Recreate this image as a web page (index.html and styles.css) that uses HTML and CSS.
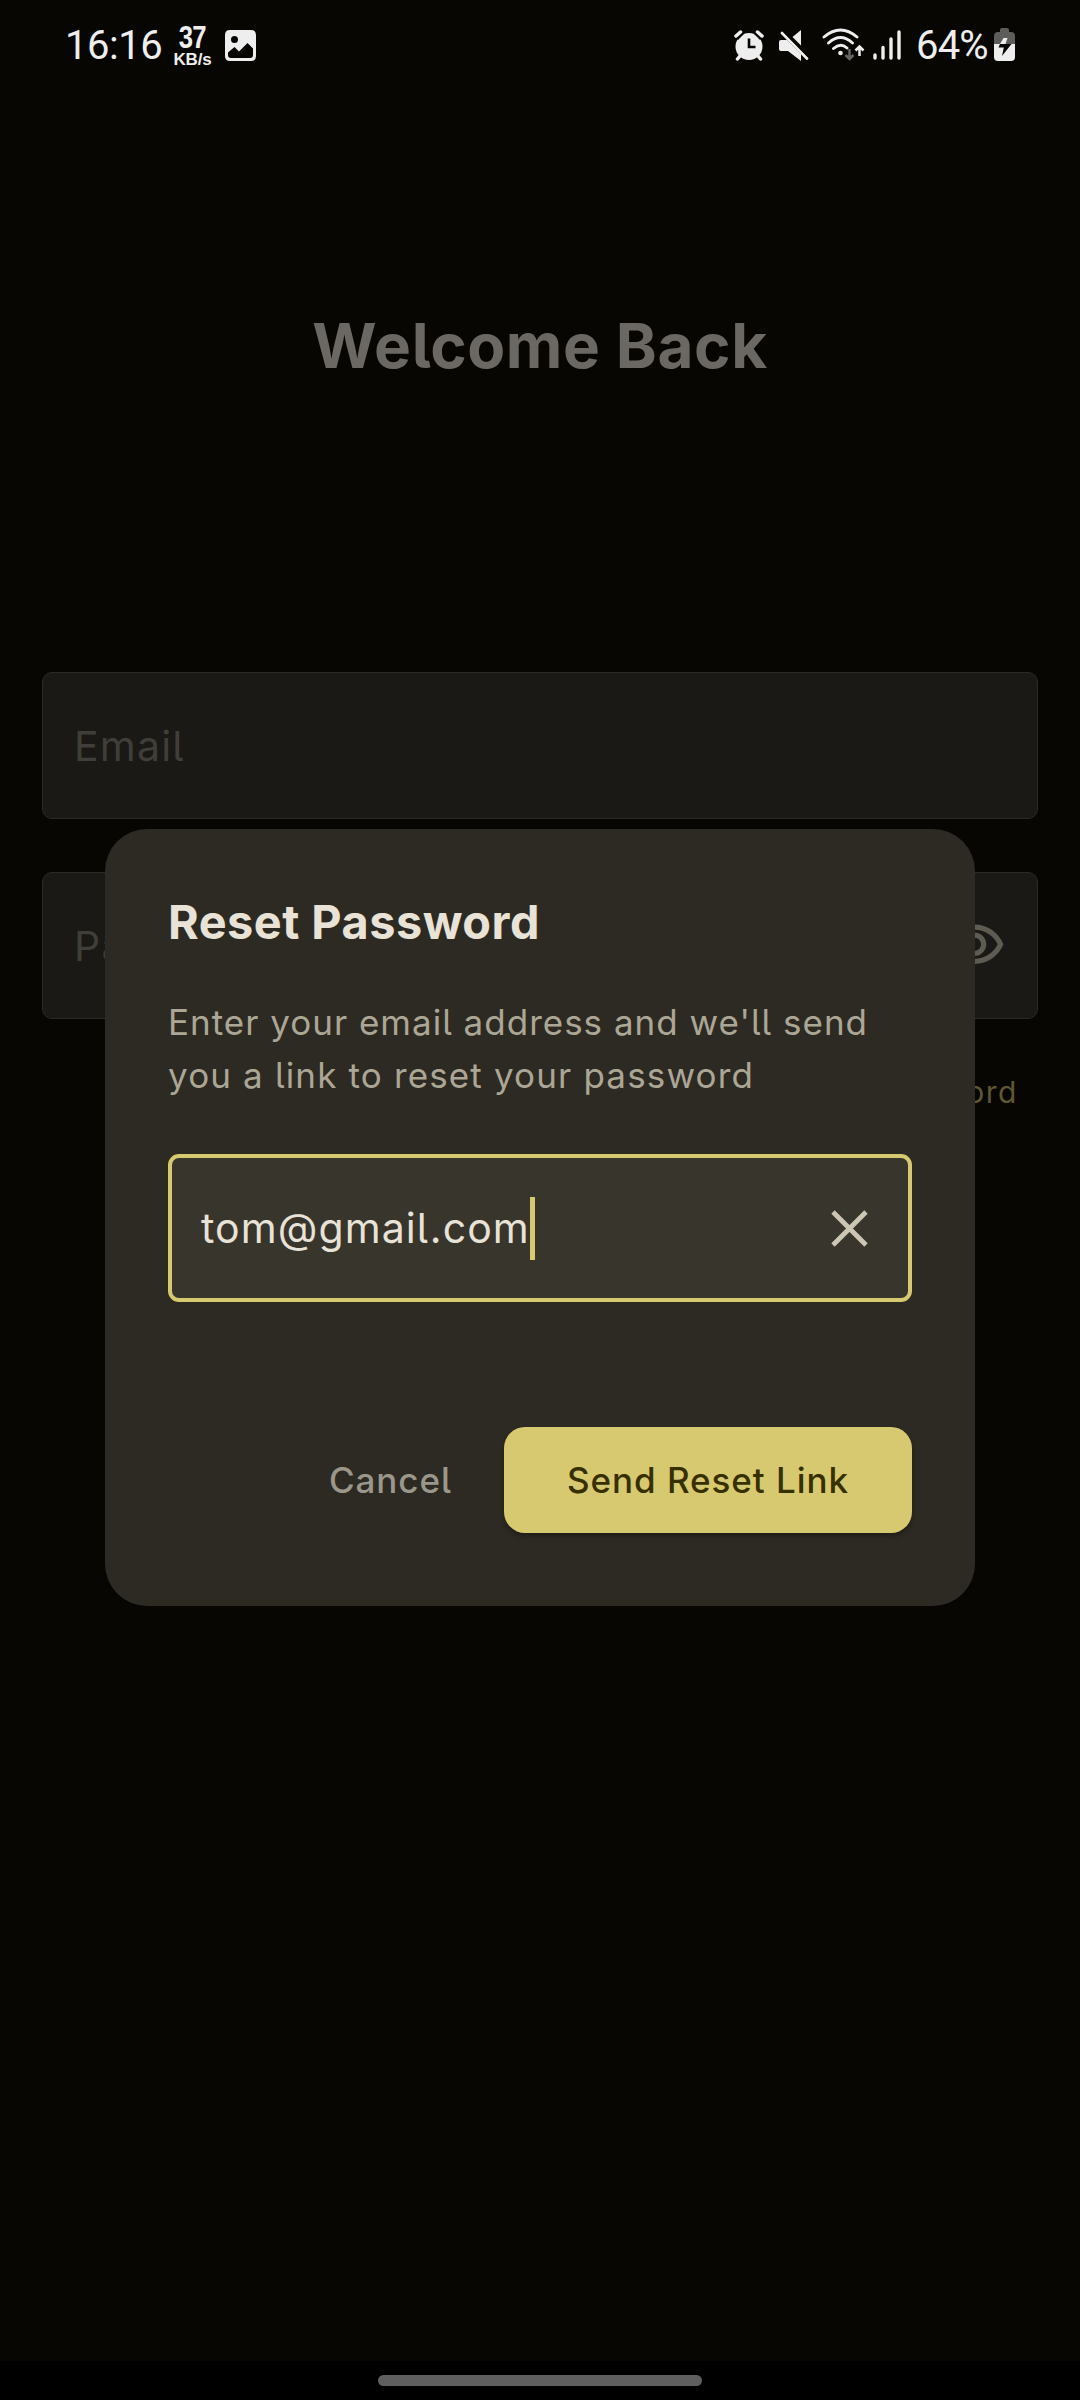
FILE: index.html
```html
<!DOCTYPE html>
<html lang="en">
<head>
<meta charset="utf-8">
<title>Reset Password</title>
<link rel="stylesheet" href="styles.css">
</head>
<body>
<div class="screen">
  <header class="status">
    <span class="clock">16:16</span>
    <span class="speed"><b class="speed-num">37</b><b class="speed-unit">KB/s</b></span>
    <svg class="icon-photo" width="31" height="31" viewBox="0 0 31 31"><path fill="#eee" fill-rule="evenodd" d="M5 0H26Q31 0 31 5V26Q31 31 26 31H5Q0 31 0 26V5Q0 0 5 0ZM9.500 6A3.500 3.500 0 1 0 9.500 13A3.500 3.500 0 1 0 9.500 6ZM3 22.500V25Q3 28 6 28H25Q28 28 28 25V18.500L22.500 13L14 21.500L9.500 17Z"/></svg>
    <span class="spacer"></span>
    <svg class="icon-alarm" width="30" height="31" viewBox="0 0 30 31"><circle cx="15" cy="16.500" r="13.500" fill="#eee"/><path d="M1.500 7.500L7.500 1.500M28.500 7.500L22.500 1.500" stroke="#070602" stroke-width="7"/><path d="M2 6L6.500 2M28 6L23.500 2M6 26L3.500 29M24 26L26.500 29" stroke="#eee" stroke-width="3.500" stroke-linecap="round"/><path d="M15 8.500V17H21.500" fill="none" stroke="#070602" stroke-width="2.600"/></svg>
    <svg class="icon-mute" width="31" height="31" viewBox="0 0 31 31"><path fill="#eee" d="M13.500 7L22 0V15.500ZM0 12Q0 10 2 10H8L22 24V31L9 21H2Q0 21 0 19Z"/><path d="M3 3L28 28.500" stroke="#eee" stroke-width="2.800" stroke-linecap="round"/><path d="M5 1.500L30 27" stroke="#070602" stroke-width="1.800"/></svg>
    <svg class="icon-wifi" width="43" height="33" viewBox="0 0 43 33"><g fill="none" stroke="#eee" stroke-width="2.900" stroke-linecap="round"><path d="M2 9Q18.500-5 35 9M6.500 15Q18.500 4 30.500 15M11.500 20.500Q18.500 14.500 25 20"/></g><circle cx="18.500" cy="25" r="2.300" fill="#eee"/><path d="M27.500 21V30.500M23.500 27L27.500 31L31.500 27" fill="none" stroke="#666" stroke-width="2.500"/><path d="M37.500 28V19M33.500 22.500L37.500 18.500L41.500 22.500" fill="none" stroke="#eee" stroke-width="2.500"/></svg>
    <svg class="icon-signal" width="28" height="30" viewBox="0 0 28 30"><path d="M2 25V28M10 17.500V28M18 9V28M26 2V28" stroke="#eee" stroke-width="3.400" stroke-linecap="round"/></svg>
    <span class="percent">64%</span>
    <svg class="icon-battery" width="21" height="33" viewBox="0 0 21 33"><path fill="#5d5d5b" d="M6 2Q6 0 8 0H13Q15 0 15 2V4H17Q21 4 21 8V16H0V8Q0 4 4 4H6Z"/><path fill="#eee" d="M0 16H21V29Q21 33 17 33H4Q0 33 0 29Z"/><path fill="#070602" d="M9 16H17.500L8 28L9.800 19.500H4.500L6 16Z"/><path fill="#eee" d="M9.500 10H13.500L11.500 16H6Z"/></svg>
  </header>

  <main class="login">
    <h1 class="welcome">Welcome Back</h1>
    <div class="field">Email</div>
    <div class="field field-password">Password
      <svg width="63" height="63" viewBox="0 0 24 24"><path fill="#5e5b52" d="M12 6c3.790 0 7.170 2.130 8.820 5.500C19.170 14.870 15.790 17 12 17s-7.170-2.130-8.820-5.500C4.830 8.130 8.210 6 12 6m0-2C7 4 2.730 7.110 1 11.500 2.730 15.890 7 19 12 19s9.270-3.110 11-7.500C21.270 7.110 17 4 12 4zm0 5c1.380 0 2.500 1.120 2.500 2.500S13.380 14 12 14s-2.500-1.120-2.500-2.500S10.620 9 12 9m0-2c-2.480 0-4.500 2.020-4.500 4.500S9.520 16 12 16s4.500-2.020 4.500-4.500S14.480 7 12 7z"/></svg>
    </div>
    <a class="forgot">Forgot Password</a>
  </main>

  <footer class="navbar"><span class="handle"></span></footer>

  <section class="dialog">
    <h2 class="title">Reset Password</h2>
    <p class="message"><span class="line-one">Enter your email address and we'll send</span><br><span class="line-two">you a link to reset your password</span></p>
    <div class="email-input">
      <span class="value">tom@gmail.com</span><span class="caret"></span>
      <svg class="clear" width="37" height="37" viewBox="0 0 37 37"><path d="M2 2L35 35M35 2L2 35" stroke="#cdc6b4" stroke-width="4.800"/></svg>
    </div>
    <div class="actions">
      <span class="cancel">Cancel</span>
      <span class="send"><span class="send-label">Send Reset Link</span></span>
    </div>
  </section>
</div>
</body>
</html>
```
FILE: styles.css
```css
* { box-sizing: border-box; }
body { margin: 0; background: #070602; }
.screen {
  position: relative;
  display: flex;
  flex-direction: column;
  width: 1080px;
  height: 2400px;
  overflow: hidden;
  background: #070602;
  font-family: Inter, "Liberation Sans", sans-serif;
  font-feature-settings: "cv05";
  white-space: nowrap;
}
svg { display: block; flex: none; }
h1, h2, p { margin: 0; }

.status {
  display: flex;
  align-items: flex-start;
  height: 90px;
  padding: 28px 65px 0 65px;
  color: #eee;
  font-family: Roboto, sans-serif;
}
.clock { width: 109px; font-size: 40px; line-height: 35px; letter-spacing: -0.5px; }
.speed {
  display: flex;
  flex-direction: column;
  align-items: center;
  width: 39px;
  margin: -3px 13px 0 -1px;
  font-family: "Liberation Sans", sans-serif;
}
.speed-num { font-size: 31px; line-height: 26px; letter-spacing: -1px; transform: scaleX(0.83); }
.speed-unit { font-size: 17px; line-height: 18px; letter-spacing: -0.2px; }
.icon-photo { margin-top: 2px; }
.spacer { flex: 1; }
.icon-alarm { margin: 2px 15px 0 0; }
.icon-mute { margin: 2px 12px 0 0; }
.icon-wifi { margin: 0 8px 0 0; }
.icon-signal { margin: 2px 15px 0 0; }
.percent { width: 78px; font-size: 40px; line-height: 35px; letter-spacing: -0.8px; }

.login { display: flex; flex-direction: column; padding: 0 42px; }
.welcome {
  margin-top: 216px;
  height: 80px;
  color: #6b6863;
  font-size: 62px;
  font-weight: 700;
  line-height: 80px;
  letter-spacing: 0.6px;
  text-align: center;
}
.field {
  display: flex;
  align-items: center;
  justify-content: space-between;
  height: 147px;
  margin-top: 286px;
  padding: 0 31px 0 31px;
  border: 1px solid #2b2a27;
  border-radius: 10px;
  background: #1a1915;
  color: #403e39;
  font-size: 41px;
  letter-spacing: 1.200px;
}
.field-password { margin-top: 53px; }
.forgot { align-self: flex-end; margin: 53px 20px 0 0; color: #5e572f; font-size: 30px; line-height: 40px; letter-spacing: 1.500px; }

.navbar {
  display: flex;
  justify-content: center;
  align-items: flex-start;
  height: 39px;
  margin-top: auto;
  padding-top: 14px;
  background: #000;
}
.handle { width: 324px; height: 11px; border-radius: 5.500px; background: #5f5f5f; }

.dialog {
  position: absolute;
  left: 105px;
  top: 829px;
  display: flex;
  flex-direction: column;
  width: 870px;
  height: 777px;
  padding: 65px 63px 0;
  border-radius: 42px;
  background: #2d2a23;
}
.title { color: #e8e2d7; font-size: 46.800px; line-height: 56px; font-weight: 700; letter-spacing: 0.5px; }
.message { margin-top: 46px; color: #aba695; font-size: 35px; line-height: 53px; }
.line-one { letter-spacing: 1px; }
.line-two { letter-spacing: 1.150px; }
.email-input {
  display: flex;
  align-items: center;
  height: 148px;
  margin-top: 52px;
  padding: 0 40px 0 29px;
  border: 4px solid #d7c970;
  border-radius: 11px;
  background: #38352d;
}
.value { color: #e8e2d7; font-size: 41px; letter-spacing: 1.080px; }
.caret { width: 5px; height: 63px; background: #d7c970; }
.clear { margin-left: auto; }
.actions { display: flex; justify-content: flex-end; align-items: center; margin-top: 125px; font-size: 35px; font-weight: 500; letter-spacing: 0.950px; }
.cancel { margin-right: 52px; color: #9b978b; }
.send {
  display: flex;
  align-items: center;
  justify-content: center;
  width: 408px;
  height: 106px;
  border-radius: 21px;
  background: #d7c970;
  color: #373100;
  box-shadow: 0 3px 5px rgba(0, 0, 0, 0.3);
}
```
